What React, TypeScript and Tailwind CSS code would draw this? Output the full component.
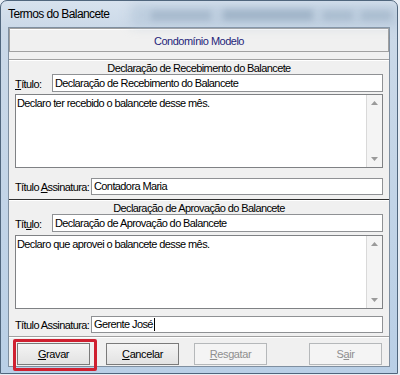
import React from "react";

const F = "[font-family:'Liberation_Sans',Arial,sans-serif]";

function TextBox({ children, h = 18 }: { children: React.ReactNode; h?: number }) {
  return (
    <div
      className="flex-1 flex items-center bg-white border border-[#8f9194] pl-[2px] text-[11px] tracking-[-0.6px] text-black whitespace-nowrap overflow-hidden"
      style={{ height: h }}
    >
      {children}
    </div>
  );
}

function Memo({ text }: { text: string }) {
  return (
    <div className="flex h-[74px] border border-[#7f8184] bg-white">
      <div className="flex-1 pl-[1px] pt-[2px] text-[11px] leading-[13px] tracking-[-0.6px] text-black border-r border-[#d9d9d9]">
        {text}
      </div>
      <div className="w-[15px] bg-[#f4f4f4] flex flex-col items-center justify-between py-[6px]">
        <svg width="7" height="4" viewBox="0 0 7 4">
          <path d="M0 4 L3.5 0 L7 4 Z" fill="#9a9a9a" />
        </svg>
        <svg width="7" height="4" viewBox="0 0 7 4">
          <path d="M0 0 L3.5 4 L7 0 Z" fill="#9a9a9a" />
        </svg>
      </div>
    </div>
  );
}

function Btn({ children, disabled, w = 73 }: { children: React.ReactNode; disabled?: boolean; w?: number }) {
  return (
    <div
      className={
        "h-[22px] flex items-center justify-center text-[11px] tracking-[-0.4px] border " +
        (disabled
          ? "border-[#b5b8ba] bg-[#f4f4f4] text-[#8f8f8f]"
          : "border-[#7a7a7a] bg-[linear-gradient(#f4f4f4,#e2e2e2)] text-black")
      }
      style={{ width: w }}
    >
      {children}
    </div>
  );
}

export default function App() {
  return (
    <div className={"relative w-[400px] h-[375px] overflow-hidden bg-[#e8eef5] " + F}>
      <div className="relative w-[398px] h-[374px] rounded-t-[7px] border border-[#50667d] bg-[linear-gradient(180deg,#d7e2ee_0px,#cbd9e8_27px,#b9cfe6_100%)] overflow-hidden">
        {/* blurred background seen through glass */}
        <div className="absolute left-[150px] top-[10px] w-[60px] h-[9px] bg-[#8fa3b8] blur-[3px] opacity-70" />
        <div className="absolute left-[222px] top-[9px] w-[90px] h-[10px] bg-[#7f95ab] blur-[3px] opacity-70" />
        <div className="absolute left-[322px] top-[10px] w-[30px] h-[9px] bg-[#90a4b8] blur-[3px] opacity-60" />
        <div className="absolute left-[360px] top-[10px] w-[30px] h-[9px] bg-[#90a4b8] blur-[3px] opacity-60" />
        <div className="absolute left-[130px] top-[3px] w-[270px] h-[22px] bg-[#a9bdd2] blur-[6px] opacity-50" />

        {/* title bar */}
        <div className="relative h-[26px] flex items-center pl-[7px] text-[12px] tracking-[-0.6px] text-black">
          Termos do Balancete
        </div>

        {/* client area */}
        <div className="mx-[7px] h-[340px] border border-[#7f8fa0] bg-[#f0f0f0] flex flex-col">
          {/* condominio */}
          <div className="h-[24px] border border-[#a0a0a0] shadow-[inset_0_1px_0_#ffffff] flex items-center justify-center pt-[3px] text-[11px] tracking-[-0.5px] text-[#1f1f7a]">
            Condomínio Modelo
          </div>

          {/* section 1 */}
          <div className="mt-[7px] h-[140px] border-t border-[#a0a0a0] shadow-[inset_0_1px_0_#ffffff] flex flex-col px-[6px]">
            <div className="h-[14px] leading-[14px] pt-[1px] text-center text-[11px] tracking-[-0.6px] text-black">
              Declaração de Recebimento do Balancete
            </div>
            <div className="h-[18px] flex items-center">
              <div className="w-[37px] text-[11px] tracking-[-0.6px] pt-[2px]">
                <span className="underline">T</span>ítulo:
              </div>
              <TextBox>Declaração de Recebimento do Balancete</TextBox>
            </div>
            <div className="mt-[2px]">
              <Memo text="Declaro ter recebido o balancete desse mês." />
            </div>
            <div className="mt-[10px] h-[17px] flex items-center">
              <div className="w-[76px] text-[11px] tracking-[-0.6px] pt-[1px]">
                Título <span className="underline">A</span>ssinatura:
              </div>
              <TextBox h={17}>Contadora Maria</TextBox>
            </div>
          </div>

          {/* section 2 */}
          <div className="h-[137px] border-t border-[#2f2f2f] shadow-[inset_0_1px_0_#ffffff] flex flex-col px-[6px]">
            <div className="h-[14px] leading-[14px] pt-[1px] text-center text-[11px] tracking-[-0.6px] text-black">
              Declaração de Aprovação do Balancete
            </div>
            <div className="h-[18px] flex items-center">
              <div className="w-[37px] text-[11px] tracking-[-0.6px] pt-[2px]">
                Tít<span className="underline">u</span>lo:
              </div>
              <TextBox>Declaração de Aprovação do Balancete</TextBox>
            </div>
            <div className="mt-[3px]">
              <Memo text="Declaro que aprovei o balancete desse mês." />
            </div>
            <div className="mt-[7px] h-[17px] flex items-center">
              <div className="w-[76px] text-[11px] tracking-[-0.6px] pt-[2px]">Título Assinatura:</div>
              <TextBox h={17}>
                Gerente José
                <span className="ml-[1px] inline-block w-[1px] h-[13px] bg-black" />
              </TextBox>
            </div>
          </div>

          {/* buttons */}
          <div className="flex-1 border-t border-[#a0a0a0] shadow-[inset_0_1px_0_#ffffff] flex items-start pt-[6px] pl-[8px] pr-[7px]">
            <Btn>
              <span className="underline">G</span>ravar
            </Btn>
            <div className="w-[16px]" />
            <Btn>
              <span className="underline">C</span>ancelar
            </Btn>
            <div className="w-[15px]" />
            <Btn disabled>
              <span className="underline">R</span>esgatar
            </Btn>
            <div className="flex-1" />
            <Btn disabled>
              S<span className="underline">a</span>ir
            </Btn>
          </div>
        </div>
      </div>

      {/* red highlight annotation */}
      <div className="absolute left-[13px] top-[339px] w-[84px] h-[32px] border-[3px] border-[#cf2030] rounded-[2px]" />
    </div>
  );
}
